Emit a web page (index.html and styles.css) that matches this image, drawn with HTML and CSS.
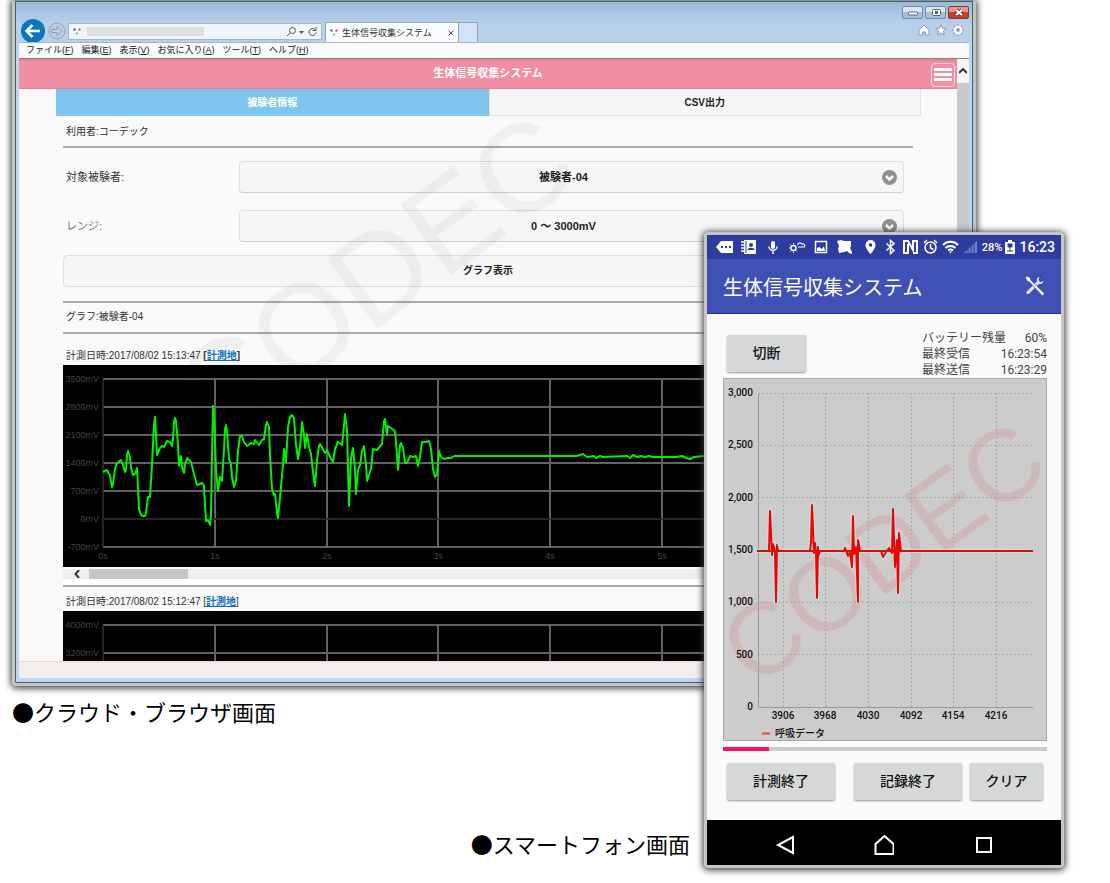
FILE: index.html
```html
<!DOCTYPE html>
<html lang="ja">
<head>
    <meta charset="UTF-8">
    <meta name="viewport" content="width=device-width, initial-scale=1.0">
    <title>生体信号収集システム</title>
    <link rel="stylesheet" href="styles.css">
</head>
<body>

    <main class="scene">

        <!-- Cloud / browser screen -->
        <figure class="cloud">
            <div class="browser">
                <div class="chrome">
                    <div class="window-buttons">
                        <button class="win-btn" aria-label="最小化"><svg width="20" height="12" viewBox="0 0 20 12"><rect x="5.500" y="5" width="9" height="3" rx="1" fill="#fff" stroke="#56657c"/></svg></button>
                        <button class="win-btn" aria-label="最大化"><svg width="20" height="12" viewBox="0 0 20 12"><rect x="6.500" y="2.500" width="8" height="6" rx="1" fill="#fff" stroke="#56657c"/><rect x="9" y="4" width="3" height="3" fill="#56657c"/></svg></button>
                        <button class="win-btn close" aria-label="閉じる"><svg width="20" height="12" viewBox="0 0 20 12"><path d="M7 3l6 5M13 3l-6 5" stroke="#6b3a3a" stroke-width="4"/><path d="M7 3l6 5M13 3l-6 5" stroke="#fff" stroke-width="2"/></svg></button>
                    </div>
                    <div class="nav-row">
                        <button class="back" aria-label="戻る"><svg width="26" height="26" viewBox="0 0 26 26"><circle cx="13" cy="13" r="12" fill="#0b76bd"/><path d="M20 13H7M12.500 7L6.500 13l6 6" fill="none" stroke="#fff" stroke-width="2.600"/></svg></button>
                        <button class="forward" aria-label="進む"><svg width="18" height="18" viewBox="0 0 18 18"><circle cx="9" cy="9" r="8" fill="#bccbe0" stroke="#93a5bd"/><path d="M4 7.500h5V4.500L13.500 9 9 13.500v-3H4z" fill="#c9d6e8" stroke="#8b9cb4"/></svg></button>
                        <div class="address">
                            <svg width="8" height="8" viewBox="0 0 8 8"><circle cx="1.500" cy="1.500" r="1.200" fill="#5061b8"/><circle cx="6.500" cy="1.500" r="1.200" fill="#ea5a4a"/><circle cx="4" cy="5.500" r="1.200" fill="#6dc98a"/></svg>
                            <input class="url" type="text" aria-label="アドレス">
                            <svg width="32" height="12" viewBox="0 0 32 12" fill="none" stroke="#555"><circle cx="6.500" cy="4.500" r="3"/><path d="M4.300 6.800L1 10"/><path d="M13 5h5l-2.500 3z" fill="#555" stroke="none"/><path d="M29 3.500a3.500 3.500 0 1 0 1 3M30 1v3.500h-3.500"/></svg>
                        </div>
                        <div class="page-tab">
                            <svg width="8" height="8" viewBox="0 0 8 8"><circle cx="1.500" cy="1.500" r="1.200" fill="#5061b8"/><circle cx="6.500" cy="1.500" r="1.200" fill="#ea5a4a"/><circle cx="4" cy="5.500" r="1.200" fill="#6dc98a"/></svg>
                            <span>生体信号収集システム</span>
                            <button class="tab-close" aria-label="タブを閉じる"><svg width="6" height="6" viewBox="0 0 6 6"><path d="M.5.5l5 5M5.500.5l-5 5" stroke="#555"/></svg></button>
                        </div>
                        <button class="new-tab" aria-label="新しいタブ"></button>
                        <div class="tools">
                            <svg width="12" height="12" viewBox="0 0 12 12"><path d="M6 1L1 6v5h3.500V8h3v3H11V6z" fill="#fff" stroke="#8d98a8"/></svg>
                            <svg width="12" height="12" viewBox="0 0 12 12"><path d="M6 .8l1.500 3.500 3.700.3-2.800 2.500.9 3.900L6 9l-3.300 2 .9-3.900L.8 4.600l3.700-.3z" fill="#fff" stroke="#8d98a8"/></svg>
                            <svg width="12" height="12" viewBox="0 0 12 12"><path d="M6 .5V3M6 9v2.500M.5 6H3M9 6h2.500M2 2l2 2M8 8l2 2M10 2L8 4M4 8l-2 2" stroke="#8d98a8" stroke-width="2"/><circle cx="6" cy="6" r="3.200" fill="#8fa0b8" stroke="#fff" stroke-width="2.500"/></svg>
                        </div>
                    </div>
                </div>
                <nav class="menu">
                    <a href="#">ファイル(<u>F</u>)</a>
                    <a href="#">編集(<u>E</u>)</a>
                    <a href="#">表示(<u>V</u>)</a>
                    <a href="#">お気に入り(<u>A</u>)</a>
                    <a href="#">ツール(<u>T</u>)</a>
                    <a href="#">ヘルプ(<u>H</u>)</a>
                </nav>

                <div class="viewport">
                    <div class="page">
                        <header class="page-header">
                            <h1>生体信号収集システム</h1>
                            <button class="hamburger" aria-label="メニュー"><span></span><span></span><span></span></button>
                        </header>
                        <div class="tabs">
                            <button class="tab active">被験者情報</button>
                            <button class="tab">CSV出力</button>
                        </div>
                        <div class="content">
                            <p class="user">利用者:コーデック</p>
                            <div class="field">
                                <label for="subject">対象被験者:</label>
                                <div class="select-box">
                                    <select id="subject"><option>被験者-04</option></select>
                                    <svg class="chevron" width="15" height="15" viewBox="0 0 15 15"><circle cx="7.500" cy="7.500" r="7.500" fill="#8f8f8f"/><path d="M4 6l3.500 3.500L11 6" fill="none" stroke="#fff" stroke-width="2.500"/></svg>
                                </div>
                            </div>
                            <div class="field">
                                <label class="soft" for="range">レンジ:</label>
                                <div class="select-box">
                                    <select id="range"><option>0 ～ 3000mV</option></select>
                                    <svg class="chevron" width="15" height="15" viewBox="0 0 15 15"><circle cx="7.500" cy="7.500" r="7.500" fill="#8f8f8f"/><path d="M4 6l3.500 3.500L11 6" fill="none" stroke="#fff" stroke-width="2.500"/></svg>
                                </div>
                            </div>
                            <button class="show-graph">グラフ表示</button>
                            <p class="graph-title">グラフ:被験者-04</p>

                            <section class="record">
                                <p class="record-date">計測日時:2017/08/02 15:13:47 <b>[<a href="#">計測地</a>]</b></p>
                                <div class="plot">
                                    <svg width="850" height="202" viewBox="0 0 850 202">
                                        <g class="grid">
                                            <path d="M40 14H850M40 42H850M40 70H850M40 98H850M40 126H850M40 182H850M152 14V182M264 14V182M375 14V182M487 14V182M599 14V182M711 14V182M823 14V182"/>
                                            <path class="faint" d="M40 154H850M40 14V182"/>
                                        </g>
                                        <g class="axis y">
                                            <text x="36" y="17">3500mV</text>
                                            <text x="36" y="45">2800mV</text>
                                            <text x="36" y="73">2100mV</text>
                                            <text x="36" y="101">1400mV</text>
                                            <text x="36" y="129">700mV</text>
                                            <text x="36" y="157">0mV</text>
                                            <text x="36" y="185">-700mV</text>
                                        </g>
                                        <g class="axis x">
                                            <text x="40" y="194">0s</text>
                                            <text x="152" y="194">1s</text>
                                            <text x="264" y="194">2s</text>
                                            <text x="375" y="194">3s</text>
                                            <text x="487" y="194">4s</text>
                                            <text x="599" y="194">5s</text>
                                        </g>
                                        <polyline class="signal" points="40,107 44,105 47,111 49,122 50,119 52,104 54,98 58,95 60,100 62,107 63,105 64,90 65,86 67,92 68,102 70,110 72,109 74,103 75,122 76,144 78,150 80,151 82,151 83,148 85,132 87,132 89,100 91,60 92,52 93,70 94,90 97,83 99,81 101,82 104,76 107,77 109,81 110,74 111,57 112,53 113,56 115,80 116,101 118,91 119,102 121,108 122,100 124,93 128,97 131,109 134,120 139,118 141,121 142,140 143,156 145,155 147,160 148,150 149,90 150,41 151,46 153,105 155,126 157,112 159,116 161,85 162,64 163,60 164,66 166,94 168,99 169,112 171,122 173,116 175,86 177,71 179,71 181,77 184,81 188,78 191,79 192,75 196,80 199,75 201,74 203,60 204,57 206,62 207,90 209,124 211,130 212,129 214,148 215,153 217,132 220,100 221,84 223,97 225,62 227,52 229,50 231,53 233,80 235,94 237,82 239,57 241,70 242,83 244,69 246,82 248,89 250,107 252,121 254,95 256,81 257,79 262,88 264,85 267,92 270,97 272,84 275,77 279,80 281,61 282,49 284,65 286,141 288,93 290,83 292,104 293,129 295,105 297,100 299,86 301,81 303,100 304,116 308,104 310,84 314,85 319,79 321,56 322,54 324,70 325,61 328,63 332,66 334,90 335,105 337,80 338,78 340,83 342,98 344,98 347,91 350,92 353,91 355,101 357,92 359,77 363,77 366,76 368,84 370,104 372,112 374,109 376,86 378,92 381,94 385,93 388,93 391,91 450,91 514,91 520,89 524,92 531,91 533,93 537,91 540,92 564,91 567,93 570,90 574,92 578,91 582,92 586,91 590,92 613,92 619,91 623,93 627,94 631,92 641,91 850,91"/>
                                    </svg>
                                </div>
                                <div class="h-scroll"><svg width="8" height="8" viewBox="0 0 8 8"><path d="M6 0L2.500 4 6 8" fill="none" stroke="#333" stroke-width="2"/></svg><span class="thumb"></span></div>
                            </section>

                            <section class="record">
                                <p class="record-date">計測日時:2017/08/02 15:12:47 [<a href="#">計測地</a>]</p>
                                <div class="plot">
                                    <svg width="850" height="50" viewBox="0 0 850 50">
                                        <g class="grid">
                                            <path d="M40 14H850M40 42H850M152 14V50M264 14V50M375 14V50M487 14V50M599 14V50M711 14V50M823 14V50"/>
                                            <path class="faint" d="M40 14V50"/>
                                        </g>
                                        <g class="axis y">
                                            <text x="36" y="17">4000mV</text>
                                            <text x="36" y="45">3200mV</text>
                                        </g>
                                    </svg>
                                </div>
                            </section>
                        </div>
                    </div>
                    <div class="v-scroll"><button class="up" aria-label="上へ"><svg width="8" height="6" viewBox="0 0 8 6"><path d="M0 5l4-4 4 4" fill="none" stroke="#333" stroke-width="2"/></svg></button></div>
                    <span class="watermark" aria-hidden="true">CODEC</span>
                </div>
                <div class="browser-status"></div>
            </div>
            <figcaption>●クラウド・ブラウザ画面</figcaption>
        </figure>

        <!-- Smartphone screen, overlapping the browser -->
        <figure class="mobile">
            <figcaption>●スマートフォン画面</figcaption>
            <div class="phone">
                <div class="status-bar">
                    <div class="notices">
                        <svg width="18" height="16" viewBox="0 0 18 16"><path d="M0 8l5-6h12v12H5z" fill="#fff"/><path d="M5 8h2M9 8h2M13 8h2" stroke="#2c3a9c" stroke-width="2"/></svg>
                        <svg width="18" height="16" viewBox="0 0 18 16"><path d="M4 1h12v14H4z" fill="#fff"/><path d="M1 3h4M1 6h4M1 9h4M1 12h4" stroke="#fff" stroke-width="1.500"/><path d="M6 2v12" stroke="#2c3a9c"/><circle cx="11" cy="6" r="2" fill="#2c3a9c"/><path d="M7.500 11c0-3 7-3 7 0z" fill="#2c3a9c"/></svg>
                        <svg width="18" height="16" viewBox="0 0 18 16"><rect x="7" y="2" width="4" height="8" rx="2" fill="#fff"/><path d="M5 7.500a4 4 0 0 0 8 0M9 11.500V15" fill="none" stroke="#fff" stroke-width="1.400"/></svg>
                        <svg width="18" height="16" viewBox="0 0 18 16" fill="none" stroke="#fff"><circle cx="5.500" cy="9" r="2.500" stroke-width="1.400"/><path d="M5.500 4V5.500M5.500 12.500v1.500M1 9h1.500M2 5.500l1 1M2 12.500l1-1M9 12.500l-1-1"/><path d="M10 8h6c2-1.500 0-3.500-2-3-1.500-2.500-5-.5-4 1" stroke-width="1.200"/></svg>
                        <svg width="18" height="16" viewBox="0 0 18 16"><rect x="3.500" y="2.500" width="11" height="11" fill="none" stroke="#fff" stroke-width="1.500"/><path d="M5 12V9l2.500-1 2 2L12 7.500l1 4.500z" fill="#fff"/></svg>
                        <svg width="18" height="16" viewBox="0 0 18 16"><path d="M1 2l4-1 3 1h7v5l-1 2 2 4v2l-3-1-2-2-3 1-5 1-1-4 1-3z" fill="#fff"/></svg>
                    </div>
                    <div class="signals">
                        <svg width="17" height="16" viewBox="0 0 17 16"><path d="M8.500 1a5 5 0 0 0-5 5c0 4 5 9 5 9s5-5 5-9a5 5 0 0 0-5-5z" fill="#fff"/><circle cx="8.500" cy="6" r="1.800" fill="#2c3a9c"/></svg>
                        <svg width="17" height="16" viewBox="0 0 17 16"><path d="M4.500 4.500l7.500 7-3.500 3V1.500L12 4.500l-7.500 7" fill="none" stroke="#fff" stroke-width="1.500"/></svg>
                        <svg width="17" height="16" viewBox="0 0 17 16"><path d="M6 5v9H2V2h4l5 9V2h4v12h-4" fill="none" stroke="#fff" stroke-width="2"/></svg>
                        <svg width="17" height="16" viewBox="0 0 17 16" fill="none" stroke="#fff" stroke-width="1.500"><circle cx="8.500" cy="8.500" r="5.500"/><path d="M8.500 5v4l3 1.500M2 4l3-3M15 4l-3-3"/></svg>
                        <svg width="17" height="16" viewBox="0 0 17 16" fill="none" stroke="#fff" stroke-width="2"><path d="M1 6a10.500 10.500 0 0 1 15 0M3.500 9a7 7 0 0 1 10 0M6 11.500a4 4 0 0 1 5 0"/><path d="M7 12.500h3l-1.500 2z" fill="#fff" stroke="none"/></svg>
                        <svg width="17" height="16" viewBox="0 0 17 16"><path d="M2 14L15 2v12z" fill="#7781c6"/><path d="M6 9v5M9 7v7M12 4v10" stroke="#2c3a9c"/></svg>
                    </div>
                    <span class="battery-level">28%</span>
                    <svg width="10" height="16" viewBox="0 0 10 16"><path d="M0 3h3V1h4v2h3v12H0z" fill="#fff"/><path d="M3 5h4v3H3zM2 12h6M5 8v4" fill="#2c3a9c" stroke="#2c3a9c"/></svg>
                    <span class="clock">16:23</span>
                </div>
                <header class="app-bar">
                    <h2>生体信号収集システム</h2>
                    <button class="settings" aria-label="設定"><svg width="22" height="22" viewBox="0 0 22 22"><path d="M20 4.500l-2.500 2-2-.5-.5-2 2-2.500c-3-.5-5.500 2-4.500 4.500L2.500 16c-2 2 .5 5 3 3L15 9.500c3 1 5.500-2 5-5z" fill="#dce1f7" stroke="#26359a"/><path d="M1.500 3L3 1l3 1.500 1 3 13.500 13-2 2.500L5.500 7 3 6z" fill="#fff" stroke="#26359a" stroke-width=".6"/></svg></button>
                </header>
                <div class="app-body">
                    <div class="summary">
                        <button class="btn disconnect">切断</button>
                        <table class="info">
                            <tbody>
                                <tr><th scope="row">バッテリー残量</th><td>60%</td></tr>
                                <tr><th scope="row">最終受信</th><td>16:23:54</td></tr>
                                <tr><th scope="row">最終送信</th><td>16:23:29</td></tr>
                            </tbody>
                        </table>
                    </div>
                    <svg class="breath-chart" viewBox="0 0 324 363">
                        <rect class="chart-bg" x=".5" y=".5" width="323" height="362"/>
                        <text class="mark" x="160" y="210" transform="rotate(-35.800 160 175)">CODEC</text>
                        <path class="dashes" d="M35 15.500H310M35 67.500H310M35 119.500H310M35 224.500H310M35 276.500H310M60.500 15V329M102.500 15V329M145.500 15V329M188.500 15V329M230.500 15V329M273.500 15V329"/>
                        <path class="axes" d="M35.500 15V329.500H310"/>
                        <g class="ticks left">
                            <text x="30" y="18">3,000</text>
                            <text x="30" y="70">2,500</text>
                            <text x="30" y="123">2,000</text>
                            <text x="30" y="175">1,500</text>
                            <text x="30" y="227">1,000</text>
                            <text x="30" y="280">500</text>
                            <text x="30" y="332">0</text>
                        </g>
                        <g class="ticks bottom">
                            <text x="60" y="341">3906</text>
                            <text x="102" y="341">3968</text>
                            <text x="145" y="341">4030</text>
                            <text x="188" y="341">4092</text>
                            <text x="230" y="341">4154</text>
                            <text x="273" y="341">4216</text>
                        </g>
                        <g class="breath">
                            <polyline class="halo" points="34,173 46,173 47,133 49,177 50,166 52,173 53,224 54,167 55,173 87,173 88,164 89,127 91,175 92,165 93,174 94,220 95,169 95,179 97,173 121,173 122,170 125,178 127,174 129,189 130,138 131,176 133,169 135,224 135,162 137,173 158,173 160,179 163,174 166,170 169,175 170,131 172,189 174,162 175,215 176,155 178,173 310,173"/>
                            <polyline points="34,173 46,173 47,133 49,177 50,166 52,173 53,224 54,167 55,173 87,173 88,164 89,127 91,175 92,165 93,174 94,220 95,169 95,179 97,173 121,173 122,170 125,178 127,174 129,189 130,138 131,176 133,169 135,224 135,162 137,173 158,173 160,179 163,174 166,170 169,175 170,131 172,189 174,162 175,215 176,155 178,173 310,173"/>
                            <path class="baseline" d="M34 173H310"/>
                        </g>
                        <path class="legend-line" d="M39 355.500h8"/>
                        <text class="legend" x="52" y="359">呼吸データ</text>
                    </svg>
                    <div class="progress"><span></span></div>
                    <div class="actions">
                        <button class="btn">計測終了</button>
                        <button class="btn">記録終了</button>
                        <button class="btn clear">クリア</button>
                    </div>
                </div>
                <div class="nav-bar">
                    <button aria-label="戻る"><svg width="20" height="20" viewBox="0 0 20 20"><path d="M18 2v16L3 10z" fill="none" stroke="#fff" stroke-width="2"/></svg></button>
                    <button aria-label="ホーム"><svg width="20" height="20" viewBox="0 0 20 20"><path d="M10.500 1l9 8v10h-18V9z" fill="none" stroke="#fff" stroke-width="2"/></svg></button>
                    <button aria-label="履歴"><svg width="20" height="20" viewBox="0 0 20 20"><rect x="4" y="3" width="14" height="14" fill="none" stroke="#fff" stroke-width="2"/></svg></button>
                </div>
            </div>
        </figure>

    </main>

</body>
</html>
```
FILE: styles.css
```css
/* Basic reset */
* {
    box-sizing: border-box;
}

html, body {
    margin: 0;
    padding: 0;
}

body {
    background: #fff;
    color: #333;
    font-family: "Liberation Sans", "Noto Sans CJK JP", sans-serif;
}

h1, h2, p, figure {
    margin: 0;
}

button {
    margin: 0;
    padding: 0;
    border: 0;
    background: none;
    color: inherit;
    font: inherit;
}

svg {
    display: block;
    flex-shrink: 0;
}

/* Both screens; the phone lies over the browser */
.scene {
    position: relative;
    min-height: 883px;
    overflow: hidden;
}

figcaption {
    color: #000;
    font-family: "Noto Sans CJK JP", sans-serif;
    font-size: 22px;
    line-height: 30px;
    white-space: nowrap;
}

/* ---------- Browser window ---------- */
.cloud {
    padding: 0 134px 0 12px;
}

.cloud figcaption {
    margin-top: 10px;
}

.browser {
    display: flex;
    flex-direction: column;
    padding: 0 4px 5px;
    border: 3px solid #c4c4c4;
    border-top: 1px solid #8e8e8e;
    border-radius: 0 0 4px 4px;
    background: #bdd5f0;
    box-shadow: inset 0 0 0 1px #3f6472, 0 1px 7px 1px #333;
}

.chrome {
    display: flex;
    flex-direction: column;
    margin: 1px -3px 0;
    padding: 4px 3px 0;
    background: linear-gradient(#9cb9da, #b9d0eb 22px);
}

.window-buttons {
    display: flex;
    justify-content: flex-end;
    gap: 2px;
}

.win-btn {
    width: 21px;
    height: 13px;
    border: 1px solid #7589a3;
    border-radius: 2px;
    background: linear-gradient(#dbe7f5 50%, #a9bdd6 50%);
    overflow: hidden;
}

.win-btn.close {
    border-color: #7c3b35;
    background: linear-gradient(#e59985 45%, #cc3c22 50%);
}

.nav-row {
    display: flex;
    align-items: flex-end;
    height: 23px;
}

.back {
    margin: 0 2px -2px 1px;
}

.forward {
    margin: 0 2px 2px 0;
}

.address {
    display: flex;
    align-items: center;
    gap: 6px;
    width: 254px;
    height: 17px;
    margin-bottom: 2px;
    padding: 0 3px 0 4px;
    border: 1px solid #a3b5cc;
    background: #f0f5fb;
}

.url {
    flex: 1;
    min-width: 0;
    height: 9px;
    margin-right: 76px;
    padding: 0;
    border: 0;
    background: #dedfe3;
    font-size: 9px;
}

.page-tab {
    display: flex;
    align-items: center;
    gap: 4px;
    width: 134px;
    height: 20px;
    margin-left: 3px;
    padding: 0 4px;
    border: 1px solid #93a3b8;
    border-bottom: 0;
    background: #fafcff;
    font-size: 9px;
    white-space: nowrap;
}

.tab-close {
    margin-left: auto;
}

.new-tab {
    width: 19px;
    height: 20px;
    border: 1px solid #93a3b8;
    border-width: 1px 1px 0 0;
    background: #d3e3f7;
}

.tools {
    display: flex;
    gap: 5px;
    margin: 0 5px 6px auto;
}

.menu {
    display: flex;
    align-items: center;
    gap: 8px;
    height: 17px;
    padding: 0 7px 2px;
    border-top: 1px solid #aab4c0;
    border-bottom: 1px solid #888;
    background: #fafafa;
    font-size: 9px;
    white-space: nowrap;
}

.menu a {
    color: #222;
    text-decoration: none;
}

.viewport {
    position: relative;
    display: flex;
    background: #f9f9f9;
    overflow: hidden;
}

.page {
    flex: 1;
    min-width: 0;
}

.page-header {
    display: flex;
    align-items: center;
    height: 30px;
    padding: 0 2px 0 26px;
    border: solid #ee7d97;
    border-width: 2px 0 1px;
    background: #f08ea4;
    color: #fff;
}

.page-header h1 {
    flex: 1;
    padding-bottom: 3px;
    font-size: 11px;
    font-weight: 700;
    line-height: 14px;
    text-align: center;
}

.hamburger {
    display: flex;
    flex-direction: column;
    gap: 2px;
    width: 24px;
    height: 24px;
    padding: 4px 2px;
    border: 1px solid #ffd7df;
    border-radius: 4px;
}

.hamburger span {
    height: 3px;
    background: #fff;
}

.tabs {
    display: flex;
    margin: 0 36px 0 37px;
}

.tab {
    flex: 1;
    height: 27px;
    padding-bottom: 2px;
    border: 1px solid #e2e2e2;
    border-top: 0;
    background: #f6f6f6;
    color: #222;
    font-size: 10px;
    font-weight: 700;
}

.tab.active {
    border-color: #80c5f0;
    background: #80c5f0;
    color: #fff;
}

.content {
    padding: 0 44px;
    font-size: 10px;
}

.user,
.graph-title {
    height: 32px;
    padding-left: 3px;
    border-bottom: 2px solid #aaa;
    line-height: 31px;
}

.field {
    display: flex;
    align-items: center;
    height: 32px;
    margin: 13px 9px 17px 0;
}

.field + .field {
    margin: 0 9px 13px 0;
}

.field label {
    width: 176px;
    padding: 0 0 2px 3px;
    font-size: 11px;
}

.field .soft {
    color: #777;
}

.select-box {
    position: relative;
    flex: 1;
}

.select-box select {
    display: block;
    width: 100%;
    height: 32px;
    padding: 0 24px 0 8px;
    border: 1px solid #dedede;
    border-bottom-color: #cfcfcf;
    border-radius: 4px;
    background: #f6f6f6;
    color: #222;
    font: bold 11px "Liberation Sans", "Noto Sans CJK JP", sans-serif;
    text-align-last: center;
    appearance: none;
}

.chevron {
    position: absolute;
    top: 9px;
    right: 7px;
}

.show-graph {
    display: block;
    width: 100%;
    height: 32px;
    padding-bottom: 3px;
    border: 1px solid #dedede;
    border-radius: 4px;
    background: #f6f6f6;
    color: #222;
    font-size: 10px;
    font-weight: 700;
}

.graph-title {
    height: 33px;
    margin-top: 14px;
    border-top: 2px solid #aaa;
    line-height: 28px;
}

.record {
    border-bottom: 2px solid #aaa;
}

.record:last-child {
    border: 0;
}

.record-date {
    height: 24px;
    padding-left: 3px;
    line-height: 30px;
    white-space: nowrap;
}

.graph-title + .record .record-date {
    height: 31px;
    line-height: 43px;
}

.record-date a {
    color: #0b6bc9;
    font-weight: 700;
}

.plot {
    background: #000;
    overflow: hidden;
}

.grid path {
    fill: none;
    stroke: #777377;
    stroke-width: 2;
    stroke-opacity: .85;
}

.grid .faint {
    stroke: #2b2b2b;
}

.axis text {
    fill: #444;
    font-size: 9px;
}

.axis.y {
    text-anchor: end;
}

.axis.x {
    text-anchor: middle;
}

.signal {
    fill: none;
    stroke: #00f000;
    stroke-width: 2;
    stroke-linejoin: round;
}

.h-scroll {
    display: flex;
    align-items: center;
    gap: 8px;
    height: 18px;
    padding: 0 0 4px 10px;
    background: linear-gradient(#fff 2px, #efefef 2px, #efefef 12px, #fff 12px);
}

.thumb {
    width: 99px;
    height: 10px;
    background: #c6c6c6;
}

.v-scroll {
    width: 12px;
    background: #c9c9c9;
}

.up {
    display: flex;
    align-items: center;
    justify-content: center;
    width: 12px;
    height: 24px;
    background: #f5f5f5;
}

.watermark {
    position: absolute;
    top: 218px;
    left: 356px;
    color: rgba(0, 0, 0, .04);
    font-size: 126px;
    line-height: 1;
    transform: translate(-50%, -50%) rotate(-36deg);
    pointer-events: none;
}

.browser-status {
    height: 17px;
    border-top: 1px solid #ddd;
    background: #f3edec;
}

/* ---------- Phone ---------- */
.mobile {
    position: absolute;
    top: 232px;
    right: 46px;
    display: flex;
    align-items: flex-end;
    gap: 14px;
}

.mobile figcaption {
    padding-bottom: 10px;
}

.phone {
    width: 360px;
    border: 3px solid #c6c6c6;
    border-radius: 4px;
    background: #fafafa;
    box-shadow: 0 1px 7px 1px #333;
    font-family: Roboto, "Noto Sans CJK JP", sans-serif;
}

.status-bar {
    display: flex;
    align-items: center;
    height: 24px;
    padding: 0 6px 0 9px;
    background: #2e3c9f;
    color: #fff;
}

.notices {
    display: flex;
    gap: 6px;
}

.signals {
    display: flex;
    gap: 3px;
    margin-left: auto;
}

.battery-level {
    margin: 0 3px;
    font-size: 11px;
    font-weight: 500;
}

.clock {
    margin-left: 4px;
    font-size: 14px;
    font-weight: 500;
}

.app-bar {
    display: flex;
    align-items: center;
    justify-content: space-between;
    height: 55px;
    padding: 0 15px 0 16px;
    border-bottom: 1px solid #1c2ea0;
    background: #3f51b5;
    color: #fff;
}

.app-bar h2 {
    font-size: 20px;
    font-weight: 400;
}

.app-body {
    padding: 16px 14px 20px 16px;
}

.summary {
    display: flex;
    align-items: flex-start;
    justify-content: space-between;
    height: 48px;
}

.btn {
    width: 108px;
    height: 37px;
    padding-bottom: 4px;
    border-radius: 2px;
    background: #d6d8d7;
    box-shadow: 0 1px 2px #999;
    color: #111;
    font-size: 14px;
    font-weight: 500;
}

.disconnect {
    width: 79px;
    margin: 5px 0 0 4px;
}

.info {
    display: block;
    width: 125px;
    border-collapse: collapse;
    color: #444;
    font-size: 12px;
    line-height: 16px;
}

.info tbody {
    display: block;
}

.info tr {
    display: flex;
    justify-content: space-between;
}

.info th,
.info td {
    padding: 0;
    font-weight: 400;
    white-space: nowrap;
}

.breath-chart {
    width: 100%;
    height: auto;
    overflow: visible;
}

.chart-bg {
    fill: #ccc;
    stroke: #aaa;
}

.mark {
    fill: #e00000;
    fill-opacity: .09;
    font-family: "Liberation Sans", sans-serif;
    font-size: 102px;
    text-anchor: middle;
}

.dashes {
    fill: none;
    stroke: #aaa;
    stroke-dasharray: 2 2;
}

.axes {
    fill: none;
    stroke: #999;
}

.ticks text,
.legend {
    fill: #111;
    font-size: 10px;
    font-weight: 500;
}

.left {
    text-anchor: end;
}

.bottom {
    text-anchor: middle;
}

.breath polyline {
    fill: none;
    stroke: #f50000;
    stroke-width: 2;
    stroke-linejoin: round;
}

.breath .halo {
    stroke: #b9e6e4;
    stroke-width: 4;
}

.baseline {
    stroke: #f50000;
    stroke-width: 2;
}

.legend-line {
    stroke: #ee4444;
    stroke-width: 2;
}

.progress {
    height: 4px;
    margin: 6px 0 12px;
    background: #ccc;
}

.progress span {
    display: block;
    width: 46px;
    height: 4px;
    background: #ff0f5f;
}

.actions {
    display: flex;
    gap: 8px;
    padding: 0 4px;
}

.actions .btn:first-child {
    margin-right: auto;
}

.actions .clear {
    width: 73px;
}

.nav-bar {
    display: flex;
    align-items: center;
    justify-content: space-around;
    height: 45px;
    padding: 4px 28px 0;
    background: #000;
}
```
